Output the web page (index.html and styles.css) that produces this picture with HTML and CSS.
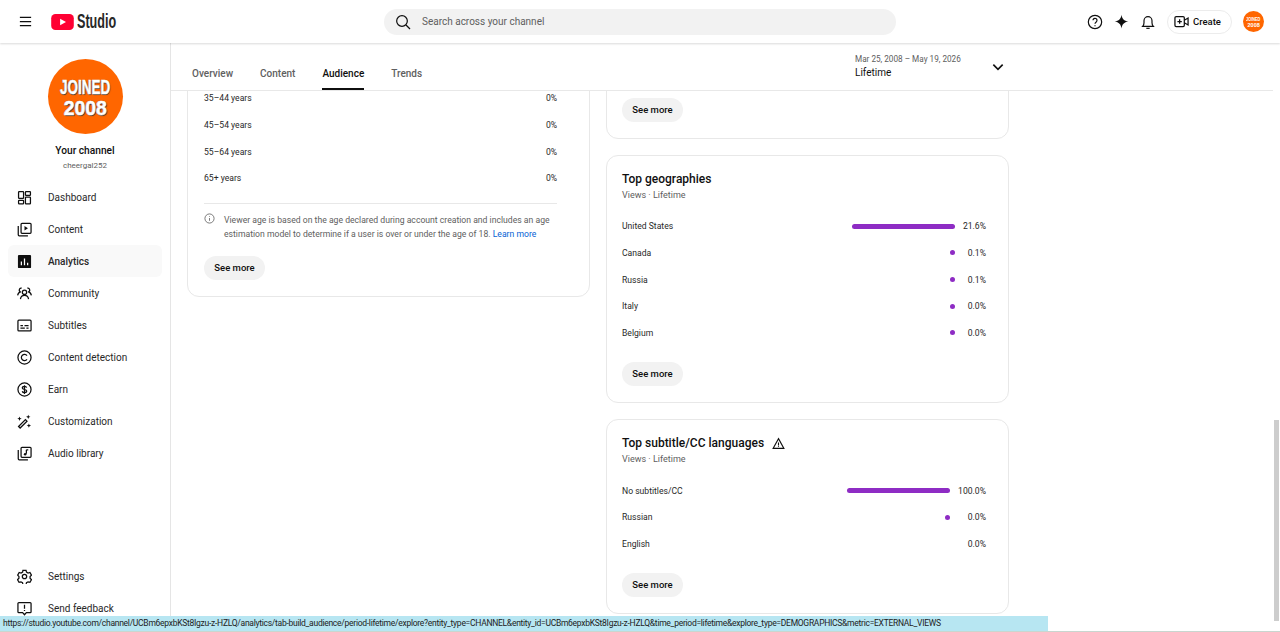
FILE: index.html
```html
<!DOCTYPE html>
<html>
<head>
<title>Channel analytics - YouTube Studio</title>
<link rel="stylesheet" href="styles.css">
</head>
<body>

	<header class="topbar">
		<div class="topbar-left">
			<svg class="menu-icon" viewBox="0 0 24 24"><path d="M3 5.5h18M3 12h18M3 18.500h18" /></svg>
			<svg class="yt-logo" viewBox="0 0 24 17"><rect width="24" height="17" rx="4.500" fill="#ff0033" /><path d="M9.500 5l6.200 3.500-6.200 3.500z" fill="#fff" /></svg>
			<span class="studio-word">Studio</span>
		</div>
		<div class="search">
			<svg class="search-icon" viewBox="0 0 24 24"><circle cx="10.500" cy="10.500" r="8" /><path d="M16.500 16.500l6 6" /></svg>
			<span>Search across your channel</span>
		</div>
		<div class="topbar-right">
			<svg class="top-icon" viewBox="0 0 24 24"><circle cx="12" cy="12" r="10" /><path d="M9 9.500a3 3 0 1 1 4.800 2.400c-1.200.9-1.800 1.500-1.800 2.800" /><path d="M12 17v1.500" /></svg>
			<svg class="top-icon solid" viewBox="0 0 24 24"><path d="M12 1c1 6.500 4 10 11 11-7 1-10 4.500-11 11-1-6.500-4-10-11-11 7-1 10-4.500 11-11z" /></svg>
			<svg class="top-icon" viewBox="0 0 24 24"><path d="M4 18.500c1.500-1.500 2-3 2-5.500v-3a6 6 0 0 1 12 0v3c0 2.500.5 4 2 5.500z" /><path d="M9.500 21.500h5" /></svg>
			<div class="create-btn">
				<svg class="create-icon" viewBox="0 0 24 24"><rect x="1.500" y="4" width="15" height="16" rx="2" /><path d="M9 8.500v7M5.500 12h7M16.500 10l6-3.500v11l-6-3.500" /></svg>
				<span>Create</span>
			</div>
			<div class="avatar-small"><span class="joined">JOINED</span><span class="year">2008</span></div>
		</div>
	</header>

	<div class="page">
		<nav class="sidebar">
			<div class="channel">
				<div class="avatar-big"><span class="joined">JOINED</span><span class="year">2008</span></div>
				<div class="channel-title">Your channel</div>
				<div class="channel-handle">cheergal252</div>
			</div>

			<div class="nav-list">
				<div class="nav-item">
					<svg class="nav-icon" viewBox="0 0 24 24"><rect x="2.500" y="2.500" width="8" height="11" rx="1" /><rect x="13.500" y="2.500" width="8" height="6" rx="1" /><rect x="2.500" y="16.500" width="8" height="5.500" rx="1" /><rect x="13.500" y="11.500" width="8" height="10.500" rx="1" /></svg>
					Dashboard
				</div>
				<div class="nav-item">
					<svg class="nav-icon" viewBox="0 0 24 24"><rect x="6.500" y="2" width="16" height="16" rx="1.500" /><path d="M2 6.500v14a1.500 1.500 0 0 0 1.500 1.500h14" /><path class="fill" d="M12 6.500l5.500 3.500-5.500 3.500z" /></svg>
					Content
				</div>
				<div class="nav-item active">
					<svg class="nav-icon" viewBox="0 0 24 24"><rect class="fill" x="1.500" y="1.500" width="21" height="21" rx="1.500" /><path class="white" d="M7 18v-6M12 18V7M17 18v-4" /></svg>
					Analytics
				</div>
				<div class="nav-item">
					<svg class="nav-icon" viewBox="0 0 24 24"><circle cx="12" cy="10" r="3.500" /><path d="M5.500 21c.5-4 3-6 6.500-6s6 2 6.500 6" /><path d="M7.500 3.500a3 3 0 1 0-1.500 6c-2.500.5-4.500 2.500-5 5.500M16.500 3.500a3 3 0 1 1 1.500 6c2.500.5 4.500 2.500 5 5.500" /></svg>
					Community
				</div>
				<div class="nav-item">
					<svg class="nav-icon" viewBox="0 0 24 24"><rect x="1.500" y="3.500" width="21" height="17" rx="1.500" /><path d="M5.500 12h4M12 12h6.500M5.500 16h7M15 16h3.500" /></svg>
					Subtitles
				</div>
				<div class="nav-item">
					<svg class="nav-icon" viewBox="0 0 24 24"><circle cx="12" cy="12" r="10.500" /><path d="M16 9a5 5 0 1 0 0 6" /></svg>
					Content detection
				</div>
				<div class="nav-item">
					<svg class="nav-icon" viewBox="0 0 24 24"><circle cx="12" cy="12" r="10.500" /><path d="M15.500 9c-.5-1.500-1.800-2-3.500-2-2 0-3.500 1-3.500 2.500 0 3.500 7 1.500 7 5 0 1.500-1.500 2.500-3.500 2.500-1.800 0-3.200-.7-3.600-2.200M12 5v14" /></svg>
					Earn
				</div>
				<div class="nav-item">
					<svg class="nav-icon" viewBox="0 0 24 24"><path d="M2.500 20l11-11 2.500 2.500-11 11z" /><path class="fill" d="M4 4l1 2.500L7.500 7.500 5 8.500 4 11 3 8.500 .5 7.500 3 6.500zM18 1l1 2.500 2.500 1-2.500 1-1 2.500-1-2.500-2.500-1 2.500-1zM19 15l1 2.500 2.500 1-2.500 1-1 2.500-1-2.500-2.500-1 2.500-1z" /></svg>
					Customization
				</div>
				<div class="nav-item">
					<svg class="nav-icon" viewBox="0 0 24 24"><rect x="6.500" y="2" width="16" height="16" rx="1.500" /><path d="M2 6.500v14a1.500 1.500 0 0 0 1.500 1.500h14" /><path d="M15 6v6.500M15 6h3" /><circle class="fill" cx="13" cy="13" r="2" /></svg>
					Audio library
				</div>
			</div>

			<div class="nav-list nav-bottom">
				<div class="nav-item">
					<svg class="nav-icon" viewBox="0 0 24 24"><circle cx="12" cy="12" r="3.500" /><path d="M9.500 2h5l.7 3 2.500 1.400 3-.9 2.400 4.300-2.200 2.200v2.900l2.200 2.200-2.400 4.300-3-.9-2.500 1.400-.7 3h-5l-.7-3-2.500-1.400-3 .9-2.400-4.300 2.200-2.200v-2.900L1.100 9.800l2.400-4.300 3 .9L9 5z" /></svg>
					Settings
				</div>
				<div class="nav-item">
					<svg class="nav-icon" viewBox="0 0 24 24"><path d="M3 2.500h18a1.500 1.500 0 0 1 1.500 1.500v13a1.500 1.500 0 0 1-1.500 1.500h-6L12 22l-3-3.500H3A1.500 1.500 0 0 1 1.500 17V4A1.500 1.500 0 0 1 3 2.500z" /><path d="M12 6v6.500M12 14.500v1.500" /></svg>
					Send feedback
				</div>
			</div>
		</nav>

		<main class="main">
			<div class="tabs">
				<div class="tab-list">
					<div class="tab">Overview</div>
					<div class="tab">Content</div>
					<div class="tab active">Audience</div>
					<div class="tab">Trends</div>
				</div>
				<div class="period">
					<div class="period-text">
						<div class="period-range">Mar 25, 2008 – May 19, 2026</div>
						<div class="period-name">Lifetime</div>
					</div>
					<svg class="chevron" viewBox="0 0 24 24"><path d="M4 8l8 8 8-8" /></svg>
				</div>
			</div>

			<div class="scroller">
				<div class="columns">
					<div class="column">
						<section class="card card-age">
							<div class="age-row"><span>35–44 years</span><span>0%</span></div>
							<div class="age-row"><span>45–54 years</span><span>0%</span></div>
							<div class="age-row"><span>55–64 years</span><span>0%</span></div>
							<div class="age-row"><span>65+ years</span><span>0%</span></div>
							<div class="note">
								<svg class="note-icon" viewBox="0 0 24 24"><circle cx="12" cy="12" r="10" /><path d="M12 11v6M12 7v1.500" /></svg>
								<div>Viewer age is based on the age declared during account creation and includes an age estimation model to determine if a user is over or under the age of 18. <a class="learn">Learn more</a></div>
							</div>
							<div class="btn">See more</div>
						</section>
					</div>

					<div class="column">
						<section class="card card-cut">
							<div class="btn">See more</div>
						</section>

						<section class="card">
							<h2 class="card-title">Top geographies</h2>
							<div class="card-sub">Views · Lifetime</div>
							<div class="bars">
								<span>United States</span><div class="bar" style="width:100%"></div><span class="val">21.6%</span>
								<span>Canada</span><div class="bar" style="width:5px"></div><span class="val">0.1%</span>
								<span>Russia</span><div class="bar" style="width:5px"></div><span class="val">0.1%</span>
								<span>Italy</span><div class="bar" style="width:5px"></div><span class="val">0.0%</span>
								<span>Belgium</span><div class="bar" style="width:5px"></div><span class="val">0.0%</span>
							</div>
							<div class="btn">See more</div>
						</section>

						<section class="card">
							<h2 class="card-title">Top subtitle/CC languages
								<svg class="warn-icon" viewBox="0 0 24 24"><path d="M12 3l10 18H2z" /><path d="M12 10v5.500M12 17v1.500" /></svg>
							</h2>
							<div class="card-sub">Views · Lifetime</div>
							<div class="bars">
								<span>No subtitles/CC</span><div class="bar" style="width:100%"></div><span class="val">100.0%</span>
								<span>Russian</span><div class="bar" style="width:5px"></div><span class="val">0.0%</span>
								<span>English</span><div class="bar" style="width:0"></div><span class="val">0.0%</span>
							</div>
							<div class="btn">See more</div>
						</section>
					</div>
				</div>
			</div>
		</main>

		<div class="scroll-track"><div class="scroll-thumb"></div></div>
	</div>

	<div class="status-bar">https://studio.youtube.com/channel/UCBm6epxbKSt8Igzu-z-HZLQ/analytics/tab-build_audience/period-lifetime/explore?entity_type=CHANNEL&amp;entity_id=UCBm6epxbKSt8Igzu-z-HZLQ&amp;time_period=lifetime&amp;explore_type=DEMOGRAPHICS&amp;metric=EXTERNAL_VIEWS</div>
	<div class="window-edge"></div>

</body>
</html>
```

FILE: styles.css
```css
html, body {
	margin: 0;
	height: 632px;
	overflow: hidden;
}

body {
	display: flex;
	flex-direction: column;
	font-family: Roboto, "Liberation Sans", sans-serif;
	font-size: 10px;
	color: #0f0f0f;
	background: #fff;
}

svg {
	fill: none;
	stroke: #0f0f0f;
	stroke-width: 2;
	flex: none;
}

svg .fill {
	fill: #0f0f0f;
	stroke: none;
}

svg .white {
	stroke: #fff;
}

/* top bar */

.topbar {
	height: 43px;
	flex: none;
	display: flex;
	align-items: center;
	justify-content: space-between;
	padding: 0 16px 0 18px;
	box-shadow: 0 1px 2px rgba(0, 0, 0, 0.15);
	position: relative;
}

.topbar-left {
	width: 366px;
	display: flex;
	align-items: center;
}

.menu-icon {
	width: 15px;
	height: 15px;
	margin-right: 18px;
}

.yt-logo {
	width: 23px;
	height: 16px;
	stroke: none;
	margin-right: 3px;
}

.studio-word {
	display: inline-block;
	font-family: "Liberation Sans", sans-serif;
	font-size: 20px;
	font-weight: bold;
	color: #282828;
	transform: scaleX(0.63);
	transform-origin: left center;
}

.search {
	width: 512px;
	height: 26px;
	border-radius: 13px;
	background: #f2f2f2;
	display: flex;
	align-items: center;
	box-sizing: border-box;
	padding-left: 11px;
	font-size: 10px;
	color: #606060;
}

.search-icon {
	width: 16px;
	height: 16px;
	margin-right: 11px;
	stroke-width: 1.800;
}

.topbar-right {
	flex: 1;
	display: flex;
	align-items: center;
	justify-content: flex-end;
}

.top-icon {
	width: 16px;
	height: 16px;
	margin-right: 11px;
	stroke-width: 1.800;
}

.top-icon.solid {
	fill: #0f0f0f;
	stroke: none;
	width: 15px;
	height: 15px;
}

.create-btn {
	width: 65px;
	height: 24px;
	box-sizing: border-box;
	margin-right: 11px;
	border: 1px solid #ececec;
	border-radius: 12px;
	display: flex;
	align-items: center;
	padding-left: 6px;
	font-size: 9.500px;
	font-weight: 500;
}

.create-icon {
	width: 15px;
	height: 15px;
	margin-right: 4px;
	stroke-width: 2;
}

.avatar-small,
.avatar-big {
	border-radius: 50%;
	background: #ff6600;
	color: #fff;
	display: flex;
	flex-direction: column;
	align-items: center;
	justify-content: center;
	font-family: "Liberation Sans", sans-serif;
	font-weight: bold;
}

.joined {
	transform: scaleX(0.64);
}

.year {
	transform: scaleX(0.92);
}

.avatar-small {
	width: 21px;
	height: 21px;
	font-size: 6px;
	line-height: 6px;
}

/* sidebar */

.page {
	flex: 1;
	min-height: 0;
	display: flex;
}

.sidebar {
	width: 170px;
	flex: none;
	border-right: 1px solid #e5e5e5;
	display: flex;
	flex-direction: column;
	padding-bottom: 8px;
}

.channel {
	height: 138px;
	padding-top: 16px;
	box-sizing: border-box;
	display: flex;
	flex-direction: column;
	align-items: center;
	flex: none;
}

.avatar-big {
	width: 75px;
	height: 75px;
	font-size: 21px;
	line-height: 21px;
	-webkit-text-stroke: 0.6px #fff;
	text-shadow: 0 0 1px #333, 1px 1px 1px #333;
	margin-bottom: 10px;
	margin-left: 1px;
}

.channel-title {
	font-size: 10.200px;
	font-weight: 500;
	line-height: 14px;
}

.channel-handle {
	font-size: 8px;
	line-height: 14px;
	color: #606060;
	margin-top: 1px;
}

.nav-bottom {
	margin-top: auto;
}

.nav-item {
	height: 32px;
	margin: 0 8px;
	padding-left: 9px;
	display: flex;
	align-items: center;
	font-size: 10px;
	color: #282828;
	border-radius: 6px;
}

.nav-item.active {
	background: #f9f9f9;
	font-weight: 500;
}

.nav-icon {
	width: 15px;
	height: 15px;
	margin-right: 16px;
	stroke-width: 2;
}

/* tabs */

.main {
	flex: 1;
	min-width: 0;
	display: flex;
	flex-direction: column;
}

.tabs {
	height: 48px;
	flex: none;
	box-sizing: border-box;
	border-bottom: 1px solid #e8e8e8;
	display: flex;
	padding-left: 21px;
	position: relative;
}

.tab-list {
	display: flex;
	gap: 27px;
	width: 663px;
	align-items: flex-end;
}

.tab {
	height: 47px;
	line-height: 61px;
	font-size: 10px;
	font-weight: 500;
	color: #606060;
	box-sizing: border-box;
}

.tab.active {
	color: #0f0f0f;
	border-bottom: 2px solid #0f0f0f;
}

.period {
	display: flex;
	align-items: center;
	width: 150px;
}

.period-text {
	width: 136px;
	margin-top: -2px;
	flex: none;
}

.period-range {
	font-size: 8.200px;
	line-height: 14px;
	color: #606060;
}

.period-name {
	font-size: 10px;
	line-height: 14px;
}

.chevron {
	width: 14px;
	height: 14px;
	stroke-width: 2.800;
}

/* cards */

.scroller {
	flex: 1;
	min-height: 0;
	overflow: hidden;
	padding-left: 16px;
}

.columns {
	display: grid;
	grid-template-columns: 403px 403px;
	gap: 16px;
	margin-top: -40px;
	align-items: start;
}

.column {
	display: flex;
	flex-direction: column;
	gap: 16px;
}

.card {
	border: 1px solid #e8e8e8;
	border-radius: 12px;
	padding: 16px 22px 16px 15px;
	background: #fff;
}

.card-age {
	padding: 33px 32px 16px 16px;
}

.card-cut {
	padding-top: 46px;
}

.card-title {
	margin: 0;
	font-size: 12px;
	font-weight: 500;
	line-height: 14px;
	display: flex;
	align-items: center;
}

.warn-icon {
	width: 13px;
	height: 13px;
	margin-left: 8px;
	stroke-width: 2;
}

.card-sub {
	font-size: 9px;
	line-height: 14px;
	color: #606060;
	margin-top: 2px;
	margin-bottom: 11px;
}

.age-row {
	height: 26.670px;
	display: flex;
	align-items: center;
	justify-content: space-between;
	font-size: 8.600px;
	color: #282828;
}

.note {
	margin-top: 11px;
	border-top: 1px solid #e8e8e8;
	padding: 9px 4px 0 0;
	display: flex;
	gap: 9px;
	font-size: 8.650px;
	line-height: 14px;
	color: #606060;
}

.note-icon {
	width: 11px;
	height: 11px;
	stroke: #606060;
	stroke-width: 1.800;
}

.learn {
	color: #065fd4;
}

.btn {
	width: 61px;
	height: 24px;
	border-radius: 12px;
	background: #f2f2f2;
	text-align: center;
	line-height: 24px;
	font-size: 9.500px;
	font-weight: 500;
}

.note + .btn {
	margin-top: 15px;
}

.bars {
	display: grid;
	grid-template-columns: 1fr 103px auto;
	column-gap: 8px;
	grid-auto-rows: 26.670px;
	align-items: center;
	font-size: 8.600px;
	color: #282828;
	margin-bottom: 16px;
}

.bar {
	height: 5px;
	background: #8e2cc4;
	border-radius: 3px;
	justify-self: end;
}

.val {
	text-align: right;
}

/* window chrome */

.scroll-track {
	width: 7px;
	flex: none;
	padding-top: 377px;
	box-sizing: border-box;
}

.scroll-thumb {
	width: 5px;
	height: 201px;
	margin-left: 1px;
	background: #cdcdcd;
}

.status-bar {
	position: absolute;
	left: 0;
	bottom: 1px;
	width: 1048px;
	height: 15px;
	box-sizing: border-box;
	padding-left: 3px;
	background: #b7e6f2;
	font-family: Roboto, sans-serif;
	font-size: 8.500px;
	letter-spacing: -0.270px;
	line-height: 15px;
	white-space: nowrap;
	overflow: hidden;
	color: #222;
}

.window-edge {
	position: absolute;
	left: 0;
	right: 0;
	bottom: 0;
	height: 1px;
	background: #c9d6cf;
}
```
